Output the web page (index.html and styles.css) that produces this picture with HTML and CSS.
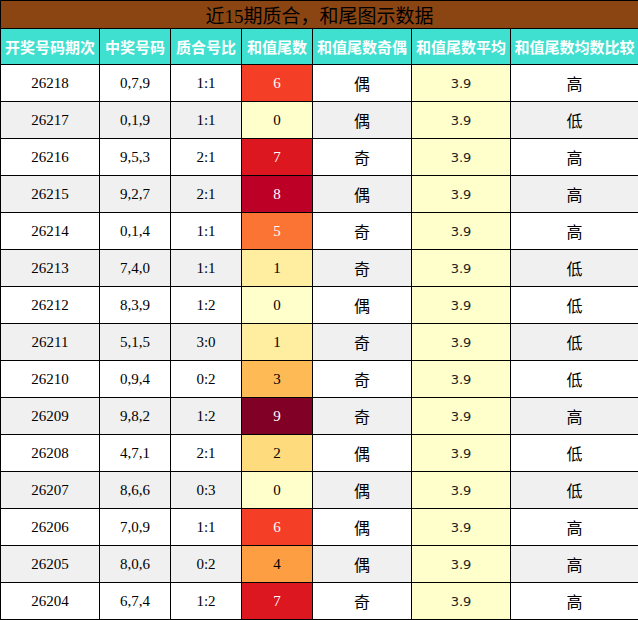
FILE: index.html
```html
<!DOCTYPE html>
<html lang="zh">
<head>
<meta charset="utf-8">
<title>近15期质合，和尾图示数据</title>
<link rel="stylesheet" href="styles.css">
</head>
<body>
<table class="grid">
  <colgroup>
    <col class="c1"><col class="c2"><col class="c3"><col class="c4"><col class="c5"><col class="c6"><col class="c7">
  </colgroup>
  <tr class="title-row"><td colspan="7" class="title">近15期质合，和尾图示数据</td></tr>
  <tr class="head-row">
    <th>开奖号码期次</th><th>中奖号码</th><th>质合号比</th><th>和值尾数</th><th>和值尾数奇偶</th><th>和值尾数平均</th><th>和值尾数均数比较</th>
  </tr>
  <tr class="row"><td class="num">26218</td><td class="num">0,7,9</td><td class="num">1:1</td><td class="num t6">6</td><td class="cjk">偶</td><td class="avg">3.9</td><td class="cjk">高</td></tr>
  <tr class="row alt"><td class="num">26217</td><td class="num">0,1,9</td><td class="num">1:1</td><td class="num t0">0</td><td class="cjk">偶</td><td class="avg">3.9</td><td class="cjk">低</td></tr>
  <tr class="row"><td class="num">26216</td><td class="num">9,5,3</td><td class="num">2:1</td><td class="num t7">7</td><td class="cjk">奇</td><td class="avg">3.9</td><td class="cjk">高</td></tr>
  <tr class="row alt"><td class="num">26215</td><td class="num">9,2,7</td><td class="num">2:1</td><td class="num t8">8</td><td class="cjk">偶</td><td class="avg">3.9</td><td class="cjk">高</td></tr>
  <tr class="row"><td class="num">26214</td><td class="num">0,1,4</td><td class="num">1:1</td><td class="num t5">5</td><td class="cjk">奇</td><td class="avg">3.9</td><td class="cjk">高</td></tr>
  <tr class="row alt"><td class="num">26213</td><td class="num">7,4,0</td><td class="num">1:1</td><td class="num t1">1</td><td class="cjk">奇</td><td class="avg">3.9</td><td class="cjk">低</td></tr>
  <tr class="row"><td class="num">26212</td><td class="num">8,3,9</td><td class="num">1:2</td><td class="num t0">0</td><td class="cjk">偶</td><td class="avg">3.9</td><td class="cjk">低</td></tr>
  <tr class="row alt"><td class="num">26211</td><td class="num">5,1,5</td><td class="num">3:0</td><td class="num t1">1</td><td class="cjk">奇</td><td class="avg">3.9</td><td class="cjk">低</td></tr>
  <tr class="row"><td class="num">26210</td><td class="num">0,9,4</td><td class="num">0:2</td><td class="num t3">3</td><td class="cjk">奇</td><td class="avg">3.9</td><td class="cjk">低</td></tr>
  <tr class="row alt"><td class="num">26209</td><td class="num">9,8,2</td><td class="num">1:2</td><td class="num t9">9</td><td class="cjk">奇</td><td class="avg">3.9</td><td class="cjk">高</td></tr>
  <tr class="row"><td class="num">26208</td><td class="num">4,7,1</td><td class="num">2:1</td><td class="num t2">2</td><td class="cjk">偶</td><td class="avg">3.9</td><td class="cjk">低</td></tr>
  <tr class="row alt"><td class="num">26207</td><td class="num">8,6,6</td><td class="num">0:3</td><td class="num t0">0</td><td class="cjk">偶</td><td class="avg">3.9</td><td class="cjk">低</td></tr>
  <tr class="row"><td class="num">26206</td><td class="num">7,0,9</td><td class="num">1:1</td><td class="num t6">6</td><td class="cjk">偶</td><td class="avg">3.9</td><td class="cjk">高</td></tr>
  <tr class="row alt"><td class="num">26205</td><td class="num">8,0,6</td><td class="num">0:2</td><td class="num t4">4</td><td class="cjk">偶</td><td class="avg">3.9</td><td class="cjk">高</td></tr>
  <tr class="row"><td class="num">26204</td><td class="num">6,7,4</td><td class="num">1:2</td><td class="num t7">7</td><td class="cjk">奇</td><td class="avg">3.9</td><td class="cjk">高</td></tr>
</table>
</body>
</html>
```

FILE: styles.css
```css
html, body {
  margin: 0;
  padding: 0;
  background: #ffffff;
}

.grid {
  width: 638px;
  border-collapse: collapse;
  table-layout: fixed;
  font-family: "Liberation Serif", "Noto Sans CJK SC", serif;
  color: #000;
}

.c1 { width: 99px; }
.c2 { width: 71px; }
.c3 { width: 71px; }
.c4 { width: 71px; }
.c5 { width: 99px; }
.c6 { width: 99px; }
.c7 { width: 128px; }

.grid td,
.grid th {
  border: 1px solid #000;
  padding: 0;
  text-align: center;
  vertical-align: middle;
  overflow: hidden;
  white-space: nowrap;
}

.title-row td { height: 27px; }
.title {
  background: #8b4513;
  color: #000;
  font-size: 19px;
  font-family: "Liberation Serif", "Noto Sans CJK SC", serif;
}

.head-row th {
  height: 35px;
  background: #40e0d0;
  color: #ffffff;
  font-family: "Noto Sans CJK SC", sans-serif;
  font-weight: bold;
  font-size: 15px;
}

.row td {
  height: 36px;
  background: #ffffff;
}
.row.alt td { background: #f0f0f0; }

.num {
  font-size: 15px;
  font-family: "Liberation Serif", serif;
}
.cjk {
  font-size: 16px;
  font-family: "Noto Sans CJK SC", sans-serif;
}
.row td.avg,
.row.alt td.avg {
  background: #ffffcc;
  font-family: "DejaVu Sans", sans-serif;
  font-size: 13px;
  color: #222;
}

.row td.t0 { background: #ffffcc; color: #000; }
.row td.t1 { background: #ffeda0; color: #000; }
.row td.t2 { background: #fedb7c; color: #000; }
.row td.t3 { background: #feba55; color: #000; }
.row td.t4 { background: #fd9e42; color: #000; }
.row td.t5 { background: #fc7433; color: #fff; }
.row td.t6 { background: #f43e26; color: #fff; }
.row td.t7 { background: #dc1720; color: #fff; }
.row td.t8 { background: #bd0026; color: #fff; }
.row td.t9 { background: #800026; color: #fff; }
```
